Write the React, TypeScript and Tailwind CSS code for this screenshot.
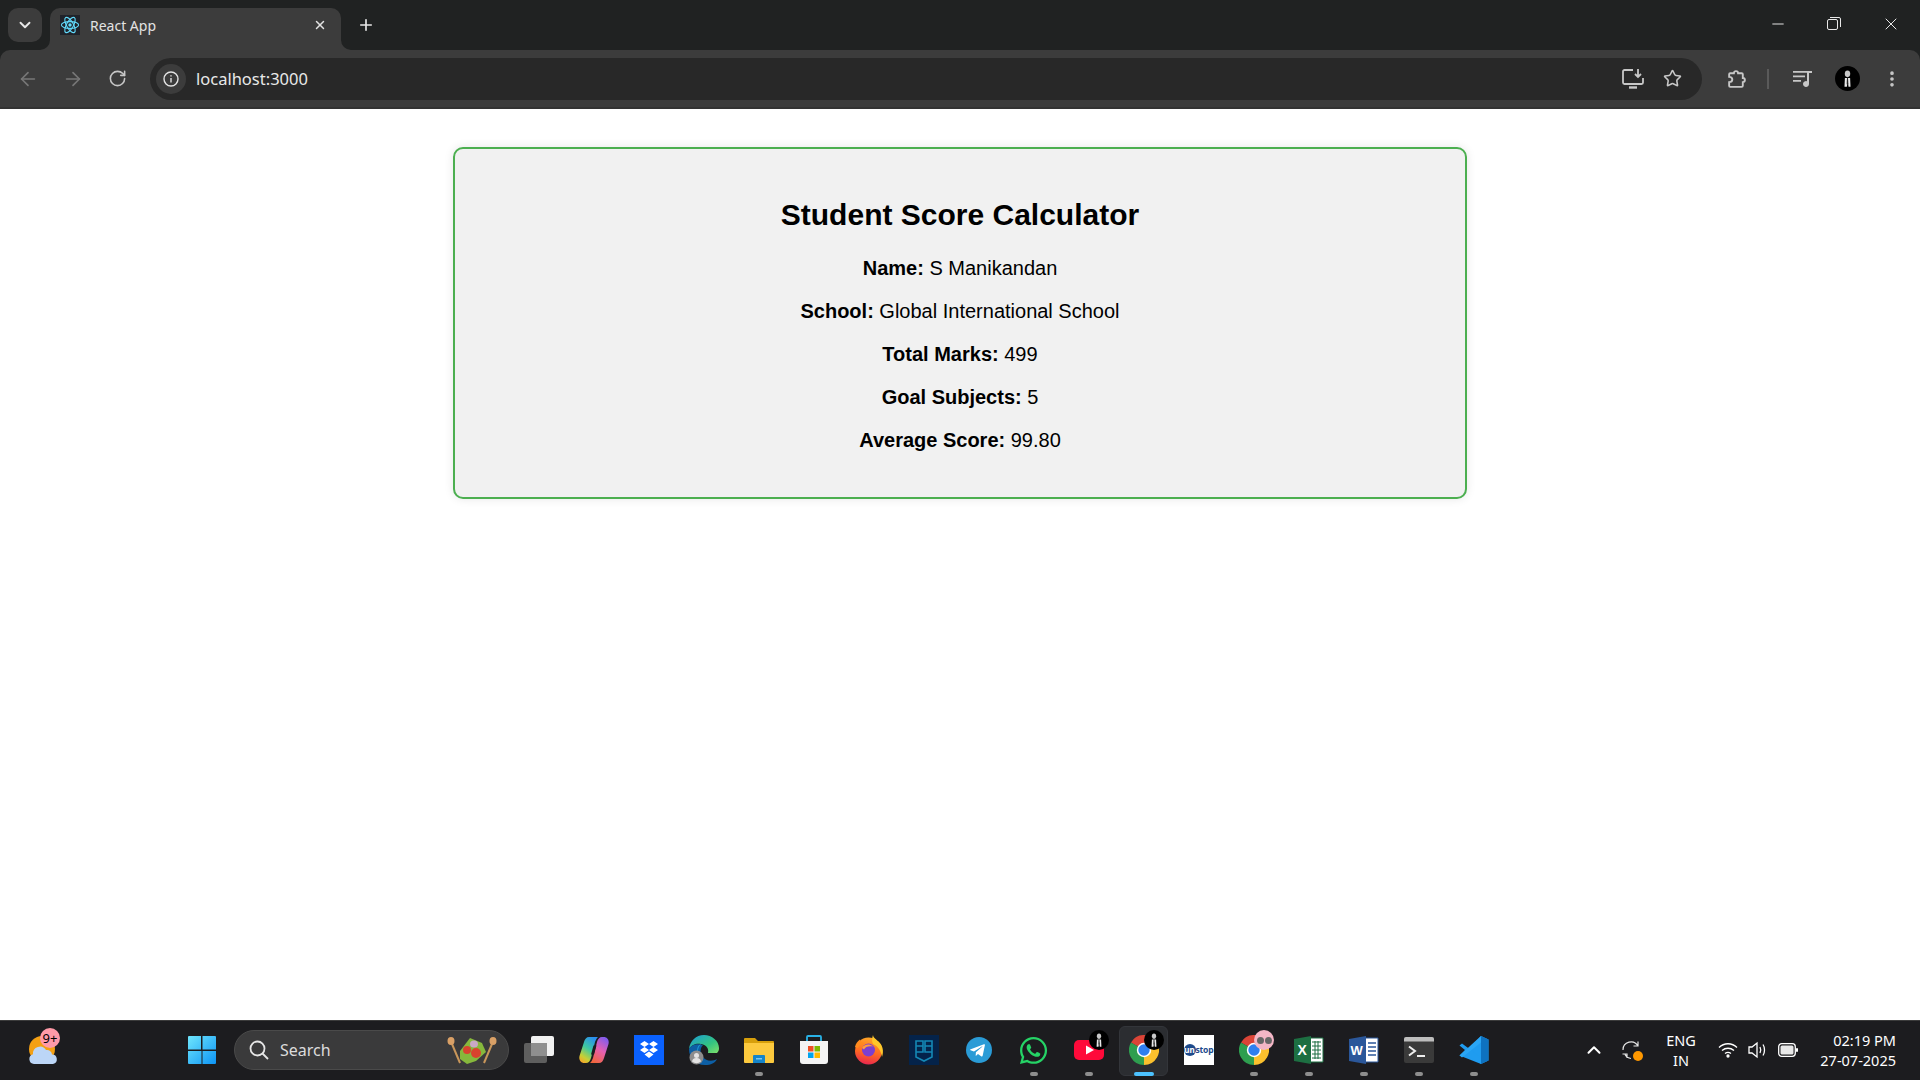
import React from 'react';
import { ArrowLeft, ArrowRight, RotateCw, Star, EllipsisVertical, Plus, X, ChevronDown, ChevronUp, Minus } from 'lucide-react';
import { FaWhatsapp, FaTelegramPlane } from 'react-icons/fa';

function ReactLogo() {
  return (
    <svg viewBox="0 0 20 20" className="w-5 h-5 bg-[#20232a]">
      <g fill="none" stroke="#61dafb" strokeWidth="1.1">
        <ellipse cx="10" cy="10" rx="8.6" ry="3.4" />
        <ellipse cx="10" cy="10" rx="8.6" ry="3.4" transform="rotate(60 10 10)" />
        <ellipse cx="10" cy="10" rx="8.6" ry="3.4" transform="rotate(120 10 10)" />
      </g>
      <circle cx="10" cy="10" r="1.7" fill="#61dafb" />
    </svg>
  );
}

function Figure({ id }: { id: string }) {
  return (
    <svg viewBox="0 0 24 24" className="w-full h-full" data-figure={id}>
      <circle cx="12" cy="12" r="12" fill="#000" />
      <ellipse cx="12" cy="7.5" rx="2.6" ry="3.2" fill="#c9c9c9" />
      <path d="M9.5 11.5h5l.4 8.5h-1.9l-.8-6-.8 6H9.1z" fill="#e8e8e8" />
      <path d="M11.5 11.5h1l.3 6h-1.6z" fill="#222" />
    </svg>
  );
}

function TabFlare({ flip }: { flip?: boolean }) {
  return (
    <svg viewBox="0 0 10 10" className={`w-2.5 h-2.5 self-end ${flip ? '-scale-x-100' : ''}`}>
      <path d="M10 0v10H0A10 10 0 0 0 10 0z" fill="#3c3c3c" />
    </svg>
  );
}

function Chrome({ size = 30 }: { size?: number }) {
  return (
    <svg viewBox="0 0 30 30" width={size} height={size}>
      <path d="M15 15 2 7.5A15 15 0 0 1 28 7.5z" fill="#db4437" />
      <path d="M15 15 28 7.5A15 15 0 0 1 15 30z" fill="#fbc02d" />
      <path d="M15 15 15 30A15 15 0 0 1 2 7.5z" fill="#2e9e4f" />
      <circle cx="15" cy="15" r="7.2" fill="#fff" />
      <circle cx="15" cy="15" r="5.7" fill="#2f7ff0" />
    </svg>
  );
}

function WindowsLogo() {
  return (
    <svg viewBox="0 0 30 30" className="w-[30px] h-[30px]">
      <defs>
        <linearGradient id="win" x1="0" y1="0" x2="1" y2="1">
          <stop offset="0" stopColor="#6fe6fc" />
          <stop offset="1" stopColor="#0d94f5" />
        </linearGradient>
      </defs>
      <path d="M1 2a1 1 0 0 1 1-1h12v13.500H1zM15.500 1H28a1 1 0 0 1 1 1v12.500H15.500zM1 16h13.500v13H2a1 1 0 0 1-1-1zM15.500 16H29v12a1 1 0 0 1-1 1H15.500z" fill="url(#win)" />
    </svg>
  );
}

function TaskView() {
  return (
    <svg viewBox="0 0 30 30" className="w-[30px] h-[30px]">
      <rect x="0" y="8" width="23" height="20" rx="2" fill="#5e5e5e" />
      <rect x="7" y="1" width="23" height="20" rx="2" fill="#f1f1f1" />
      <rect x="7" y="8" width="16" height="13" fill="#8f8f8f" />
    </svg>
  );
}

function Copilot() {
  return (
    <svg viewBox="0 0 30 30" className="w-[30px] h-[30px]">
      <defs>
        <linearGradient id="cpA" x1="0.7" y1="0" x2="0.2" y2="1">
          <stop offset="0" stopColor="#2a8ff0" />
          <stop offset="0.45" stopColor="#3fc9a0" />
          <stop offset="0.8" stopColor="#c7d034" />
          <stop offset="1" stopColor="#f6a52a" />
        </linearGradient>
        <linearGradient id="cpB" x1="0.3" y1="1" x2="0.8" y2="0">
          <stop offset="0" stopColor="#f0653f" />
          <stop offset="0.5" stopColor="#e55fb0" />
          <stop offset="1" stopColor="#7d5cf0" />
        </linearGradient>
      </defs>
      <path d="M10 2h9c-1.500 1-2 3-3 5l-4 16c-.8 3-2.500 5-5 5H5c-3 0-5.500-3-4.500-7L5 7c.8-3 2.500-5 5-5z" fill="url(#cpA)" />
      <path d="M20 28h-9c1.500-1 2-3 3-5l4-16c.8-3 2.500-5 5-5h2c3 0 5.500 3 4.500 7L25 23c-.8 3-2.500 5-5 5z" fill="url(#cpB)" />
      <path d="M14.500 10.500h3l-2.500 9h-3z" fill="#1c1c1f" />
    </svg>
  );
}

function Dropbox() {
  return (
    <svg viewBox="0 0 30 30" className="w-[30px] h-[30px]">
      <rect width="30" height="30" fill="#0a61fe" />
      <path d="M10.500 6 6 9l4.500 3L15 9zM19.500 6 15 9l4.500 3L24 9zM6 15l4.500 3L15 15l-4.500-3zM24 15l-4.500 3L15 15l4.500-3zM10.500 19.500 15 16.500l4.500 3L15 23z" fill="#fff" />
    </svg>
  );
}

function Edge() {
  return (
    <svg viewBox="0 0 30 30" className="w-[30px] h-[30px]">
      <defs>
        <linearGradient id="edA" x1="0" y1="0" x2="1" y2="1">
          <stop offset="0" stopColor="#1b9bd8" />
          <stop offset="0.6" stopColor="#33c481" />
          <stop offset="1" stopColor="#7fe06a" />
        </linearGradient>
      </defs>
      <path d="M15 0C7 0 1 6 0 14c3-5 8-6 12-5 6 1 8 5 7 9h9c2-2 2-4 2-5C30 6 23 0 15 0z" fill="url(#edA)" />
      <path d="M0 14c0 9 6 16 16 16 6 0 10-2 12-6-5 3-12 2-15-3-2-3-2-8 1-11-6-2-12 0-14 4z" fill="#0d5fa5" />
      <path d="M12 9c-3 1-5 5-3 10 2 5 6 8 11 8-6 0-10-4-11-9-.5-4 1-7 3-9z" fill="#1b9bd8" />
      <circle cx="7.500" cy="22.500" r="7" fill="#8d8d8d" />
      <circle cx="7.500" cy="20.500" r="2.500" fill="#e3e3e3" />
      <path d="M3 26.500c.6-3 2.500-3.500 4.500-3.500s3.900.5 4.500 3.500a7 7 0 0 1-9 0z" fill="#e3e3e3" />
    </svg>
  );
}

function Files() {
  return (
    <svg viewBox="0 0 30 30" className="w-[30px] h-[30px]">
      <path d="M0 4a1 1 0 0 1 1-1h10l3 3h15a1 1 0 0 1 1 1v6H0z" fill="#d79f0b" />
      <path d="M0 8h30v19a1 1 0 0 1-1 1H1a1 1 0 0 1-1-1z" fill="#fcc93e" />
      <path d="M9 21a1 1 0 0 1 1-1h10a1 1 0 0 1 1 1v7H9z" fill="#1584c9" />
      <rect x="12" y="23" width="6" height="1.500" fill="#7cc6ef" />
    </svg>
  );
}

function Store() {
  return (
    <svg viewBox="0 0 30 30" className="w-[30px] h-[30px]">
      <path d="M8 6V2a1 1 0 0 1 1-1h12a1 1 0 0 1 1 1v4" fill="none" stroke="#29b2e6" strokeWidth="1.800" />
      <path d="M1 6h28v20a3 3 0 0 1-3 3H4a3 3 0 0 1-3-3z" fill="#f4f4f4" />
      <rect x="9" y="11" width="5.500" height="5.500" fill="#ef4f25" />
      <rect x="15.500" y="11" width="5.500" height="5.500" fill="#7fb900" />
      <rect x="9" y="17.500" width="5.500" height="5.500" fill="#00a4ef" />
      <rect x="15.500" y="17.500" width="5.500" height="5.500" fill="#ffb900" />
    </svg>
  );
}

function Firefox() {
  return (
    <svg viewBox="0 0 30 30" className="w-[30px] h-[30px]">
      <defs>
        <linearGradient id="ffA" x1="0.6" y1="0" x2="0.4" y2="1">
          <stop offset="0" stopColor="#ffa726" />
          <stop offset="0.55" stopColor="#ff6a21" />
          <stop offset="1" stopColor="#e8264f" />
        </linearGradient>
      </defs>
      <circle cx="14.500" cy="16" r="13.500" fill="url(#ffA)" />
      <path d="M19 0c0 4 8 6 9.500 13 .8 3 .5 6-.5 9-1-6-4-11-9-13-1.500-3-1-6 0-9z" fill="#ffc72b" />
      <path d="M1 12c.5-3 2.500-6 5-7.500 0 2 2 3.500 5 3.500-3 1-6 2-7 5z" fill="#ff8a1e" />
      <circle cx="14.500" cy="15" r="6.500" fill="#7b3fd0" />
      <path d="M8 13c2-3.500 7-5 11-1.500-3.500-1-8 0-9 3z" fill="#ff9d3b" />
    </svg>
  );
}

function Shield() {
  return (
    <svg viewBox="0 0 30 30" className="w-[30px] h-[30px]">
      <rect width="30" height="30" fill="#04234a" />
      <path d="M7 6h7v11h-7zM16 6h7v11h-7zM7 17v5l8 4 8-4v-5M14 11H7M23 11h-7" fill="none" stroke="#1488b5" strokeWidth="1.600" />
    </svg>
  );
}

function Telegram() {
  return (
    <div className="w-[26px] h-[26px] rounded-full bg-[#2a9bd6] flex items-center justify-center">
      <FaTelegramPlane className="w-[17px] h-[17px] text-white -ml-0.5" />
    </div>
  );
}

function YouTube() {
  return (
    <svg viewBox="0 0 30 30" className="w-[30px] h-[30px]">
      <rect y="5" width="30" height="20" rx="5" fill="#ff0a3a" />
      <path d="M12 10.500 20 15l-8 4.500z" fill="#fff" />
    </svg>
  );
}

function Unstop() {
  return (
    <div className="w-[30px] h-[30px] bg-white flex items-center overflow-hidden">
      <span className="w-3 h-3 rounded-full bg-[#1d4a8c] text-white text-[8px] leading-3 font-bold text-center shrink-0">un</span>
      <span className="text-[#1d4a8c] text-[8.5px] font-bold tracking-tight leading-3">stop</span>
    </div>
  );
}

function Excel() {
  return (
    <svg viewBox="0 0 30 30" className="w-[30px] h-[30px]">
      <path d="M14 3h15v24H14z" fill="#fff" stroke="#1d6f42" strokeWidth="1" />
      <path d="M18 7h9M18 11h9M18 15h9M18 19h9M18 23h9M21 6v18M24 6v18" stroke="#1d6f42" strokeWidth="1" />
      <path d="M0 4l17-3v28L0 26z" fill="#1d6f42" />
      <text x="3.500" y="20" fill="#fff" fontSize="14" fontWeight="700" fontFamily="Liberation Sans, sans-serif">X</text>
    </svg>
  );
}

function Word() {
  return (
    <svg viewBox="0 0 30 30" className="w-[30px] h-[30px]">
      <path d="M14 3h15v24H14z" fill="#fff" stroke="#2b579a" strokeWidth="1" />
      <path d="M19 8h8M19 12h8M19 16h8M19 20h8" stroke="#2b579a" strokeWidth="1.600" />
      <path d="M0 4l17-3v28L0 26z" fill="#2b579a" />
      <text x="1.500" y="20" fill="#fff" fontSize="13" fontWeight="700" fontFamily="Liberation Sans, sans-serif">W</text>
    </svg>
  );
}

function Terminal() {
  return (
    <svg viewBox="0 0 30 30" className="w-[30px] h-[30px]">
      <rect y="2" width="30" height="26" rx="2" fill="#3a3a3a" />
      <path d="M0 4a2 2 0 0 1 2-2h26a2 2 0 0 1 2 2v2.500H0z" fill="#bdbdbd" />
      <path d="M5 11.500 11 16l-6 4.500" fill="none" stroke="#eee" strokeWidth="2" />
      <path d="M13 21h8" stroke="#eee" strokeWidth="2" />
    </svg>
  );
}

function VsCode() {
  return (
    <svg viewBox="0 0 30 30" className="w-[30px] h-[30px]">
      <path d="M22 1 29.500 4.500v21L22 29 8 16z" fill="#1f9cf0" />
      <path d="M22 1 29.500 4.500v21L22 29z" fill="#0e72c0" />
      <path d="M.5 10.500 3 8.500l19 14v6.500L.5 20.500l5.500-5.500z" fill="#1f9cf0" />
      <path d="M.5 20.500 3 22.500 22 7.500V1z" fill="#2aa6f5" />
    </svg>
  );
}

function Weather() {
  return (
    <svg viewBox="0 0 30 30" className="w-[30px] h-[34px]">
      <circle cx="14" cy="14" r="13" fill="#f3a014" />
      <path d="M6 29a5 5 0 0 1-1-9.800A7 7 0 0 1 18 15a5 5 0 0 1 6 4.500A4.800 4.800 0 0 1 25 29z" fill="#bcd6f7" />
    </svg>
  );
}

function Salad() {
  return (
    <svg viewBox="0 0 52 28" className="w-[52px] h-7">
      <path d="M6 8 14 27" stroke="#c8965a" strokeWidth="2" />
      <path d="M46 8 38 27" stroke="#c8965a" strokeWidth="2" />
      <ellipse cx="5" cy="5" rx="3.500" ry="4" fill="#d9a066" />
      <ellipse cx="47" cy="5" rx="3.500" ry="4" fill="#d9a066" />
      <path d="M14 15 24 2l12 5 4 9-10 9-9 3-7-5z" fill="#86b83c" />
      <circle cx="30" cy="17" r="5" fill="#d8432e" />
      <circle cx="21" cy="14" r="4" fill="#d8432e" />
      <ellipse cx="28" cy="8" rx="4" ry="3.500" fill="#c9a8c6" />
    </svg>
  );
}

const apps = [
  { key: 'taskview', icon: <TaskView /> },
  { key: 'copilot', icon: <Copilot /> },
  { key: 'dropbox', icon: <Dropbox /> },
  { key: 'edge', icon: <Edge /> },
  { key: 'files', icon: <Files />, running: true },
  { key: 'store', icon: <Store /> },
  { key: 'firefox', icon: <Firefox /> },
  { key: 'shield', icon: <Shield /> },
  { key: 'telegram', icon: <Telegram /> },
  { key: 'whatsapp', icon: <FaWhatsapp className="w-[31px] h-[31px] text-[#25d366]" />, running: true },
  { key: 'youtube', icon: <YouTube />, running: true, figure: true },
  { key: 'chrome', icon: <Chrome />, active: true, figure: true },
  { key: 'unstop', icon: <Unstop /> },
  { key: 'chrome2', icon: <Chrome />, running: true, glasses: true },
  { key: 'excel', icon: <Excel />, running: true },
  { key: 'word', icon: <Word />, running: true },
  { key: 'terminal', icon: <Terminal />, running: true },
  { key: 'vscode', icon: <VsCode />, running: true },
];

function BrowserChrome() {
  return (
    <div className="shrink-0 font-['Noto_Sans',sans-serif]">
      <div className="h-[50px] bg-[#202222] flex items-start pl-2">
        <button className="mt-2 w-[34px] h-[34px] rounded-[10px] bg-[#3c3c3c] flex items-center justify-center text-[#e8e8e8]">
          <ChevronDown className="w-[18px] h-[18px]" strokeWidth={2.5} />
        </button>
        <div className="ml-[-2px] h-full flex">
          <TabFlare />
          <div className="mt-2 w-[291px] h-[42px] bg-[#3c3c3c] rounded-t-[10px] flex items-center pl-[10px] pr-[14px] pb-2 text-[#e3e3e3]">
            <ReactLogo />
            <span className="ml-[10px] text-[14px] flex-1">React App</span>
            <X className="w-[14px] h-[14px]" strokeWidth={2.5} />
          </div>
          <TabFlare flip />
        </div>
        <Plus className="ml-[6px] mt-[16px] w-[18px] h-[18px] text-[#e8e8e8]" strokeWidth={2.2} />
        <div className="ml-auto h-[50px] flex items-start text-[#e8e8e8]">
          <div className="w-[56px] flex justify-center pt-[15px]"><Minus className="w-[18px] h-[18px]" strokeWidth={1.3} /></div>
          <div className="w-[56px] flex justify-center pt-[17px]">
            <svg viewBox="0 0 14 14" className="w-[14px] h-[14px]" fill="none" stroke="currentColor">
              <rect x="0.500" y="2.500" width="10" height="10" rx="1.500" />
              <path d="M3 .5h9a1.500 1.500 0 0 1 1.500 1.500v8" />
            </svg>
          </div>
          <div className="w-[58px] flex justify-center pt-[14px]"><X className="w-[20px] h-[20px]" strokeWidth={1.2} /></div>
        </div>
      </div>
      <div className="h-[59px] bg-[#202222]">
        <div className="h-full bg-[#3c3c3c] rounded-t-[10px] border-b-2 border-[#333333] flex items-center pl-[17px]">
          <ArrowLeft className="w-[22px] h-[22px] text-[#777777]" strokeWidth={1.8} />
          <ArrowRight className="ml-[23px] w-[22px] h-[22px] text-[#777777]" strokeWidth={1.8} />
          <RotateCw className="ml-[24px] w-[19px] h-[19px] text-[#c7c7c7]" strokeWidth={2} />
          <div className="ml-[23px] w-[1552px] h-[42px] rounded-full bg-[#282828] flex items-center pl-[6px] pr-[20px]">
            <span className="w-[30px] h-[30px] rounded-full bg-[#3c3c3c] flex items-center justify-center">
              <svg viewBox="0 0 16 16" className="w-4 h-4" fill="none" stroke="#e3e3e3" strokeWidth="1.400">
                <circle cx="8" cy="8" r="7" />
                <path d="M8 7v4.500M8 4.200v1.300" />
              </svg>
            </span>
            <span className="ml-[10px] mt-[2px] text-[16.5px] text-[#e8e8e8] flex-1">localhost:3000</span>
            <svg viewBox="0 0 22 20" className="w-[22px] h-5" fill="none" stroke="#c7c7c7" strokeWidth="1.800">
              <path d="M11 1H2.500A1.500 1.500 0 0 0 1 2.500v11A1.500 1.500 0 0 0 2.500 15h17a1.500 1.500 0 0 0 1.500-1.500V9" />
              <path d="M7 18.500h8" strokeWidth="2.400" />
              <path d="M16 0v7M13 5l3 3 3-3" />
            </svg>
            <Star className="ml-[19px] w-[19px] h-[19px] text-[#c7c7c7]" strokeWidth={2} />
          </div>
          <svg viewBox="0 0 20 20" className="ml-[24px] w-[21px] h-[21px]" fill="none" stroke="#c7c7c7" strokeWidth="1.800">
            <path d="M4 5h3.500a2 2 0 0 1 4 0H15a1 1 0 0 1 1 1v3.500a2 2 0 0 1 0 4V17a1 1 0 0 1-1 1H4a1 1 0 0 1-1-1v-3.500c2 0 3-1 3-2.500s-1-2.500-3-2.500V6a1 1 0 0 1 1-1z" />
          </svg>
          <span className="ml-[20px] w-[2px] h-[20px] bg-[#5a5a5a]" />
          <svg viewBox="0 0 20 20" className="ml-[24px] w-5 h-5" fill="#c7c7c7">
            <path d="M0 2h14v1.800H0zM0 6.500h12v1.800H0zM0 11h8v1.800H0z" />
            <path d="M14 2h5v2h-3v11a3 3 0 1 1-2-2.800z" />
          </svg>
          <span className="ml-[22px] w-[25px] h-[25px]"><Figure id="avatar" /></span>
          <EllipsisVertical className="ml-[22px] w-[20px] h-[20px] text-[#c7c7c7]" strokeWidth={2.4} />
        </div>
      </div>
    </div>
  );
}

function Taskbar() {
  return (
    <div className="h-[60px] shrink-0 bg-[#1c1c1f] border-t border-[#3b3b3b] flex items-center pb-px font-['Noto_Sans',sans-serif]">
      <div className="ml-[28px] w-[30px] relative flex items-center">
        <Weather />
        <span className="absolute -top-[5px] left-[12px] w-5 h-5 rounded-full bg-[#ff9aa8] text-black text-[13px] leading-5 text-center">9+</span>
      </div>
      <div className="ml-[129px]"><WindowsLogo /></div>
      <div className="ml-[17px] w-[275px] h-[40px] rounded-full bg-[#3a3a3b] border border-[#4a4a4a] flex items-center pl-[14px] pr-[10px] text-[#dcdcdc]">
        <svg viewBox="0 0 20 20" className="w-5 h-5" fill="none" stroke="#e6e6e6" strokeWidth="1.800">
          <circle cx="8.500" cy="8.500" r="7" />
          <path d="M13.500 13.500 19 19" />
        </svg>
        <span className="ml-[11px] text-[16px] flex-1">Search</span>
        <Salad />
      </div>
      <div className="ml-[2px] flex h-full">
        {apps.map((app) => (
          <div key={app.key} className="relative w-[55px] h-full flex items-center justify-center">
            {app.active && (
              <span className="absolute left-[3px] top-[5px] w-[49px] h-[50px] rounded-md bg-[#2b2d31] border border-[#33353a]" />
            )}
            <span className="relative flex items-center justify-center">{app.icon}</span>
            {app.figure && (
              <span className="absolute left-[28px] top-[9px] w-5 h-5"><Figure id={app.key} /></span>
            )}
            {app.glasses && (
              <span className="absolute left-[28px] top-[9px] w-5 h-5 rounded-full bg-[#f3b6c6] flex items-center justify-center gap-px">
                <span className="w-[7px] h-[7px] rounded-full bg-[#666666]" />
                <span className="w-[7px] h-[7px] rounded-full bg-[#666666]" />
              </span>
            )}
            {app.running && (
              <span className="absolute left-[24px] bottom-[3px] w-2 h-1 rounded-full bg-[#8e8e8e]" />
            )}
            {app.active && (
              <span className="absolute left-[18px] bottom-[3px] w-5 h-1 rounded-full bg-[#4cc2ff]" />
            )}
          </div>
        ))}
      </div>
      <div className="ml-auto flex items-center text-white text-[14.5px] leading-5">
        <ChevronUp className="w-[22px] h-[22px]" strokeWidth={2.2} />
        <span className="ml-[17px] relative w-5 h-5">
          <svg viewBox="0 0 20 20" className="w-5 h-5" fill="none" stroke="#e6e6e6" strokeWidth="1.200">
            <path d="M1 10a8 8 0 0 1 15-4M16 1.500V6h-4.500" />
            <path d="M3 14.500a8 8 0 0 0 6 4M.5 14H5v4" />
          </svg>
          <span className="absolute right-[-1px] bottom-[-1px] w-[10px] h-[10px] rounded-full bg-[#ff9800]" />
        </span>
        <div className="ml-[11px] w-[56px] text-center">
          <div>ENG</div>
          <div>IN</div>
        </div>
        <svg viewBox="0 0 20 16" className="ml-[9px] w-5 h-4" fill="none" stroke="#fff" strokeWidth="1.300">
          <path d="M1 5.500c5-5 13-5 18 0M4 8.500c3.500-3 8.500-3 12 0M7 11.500c1.800-1.400 4.200-1.400 6 0" />
          <circle cx="10" cy="14" r="1" fill="#fff" />
        </svg>
        <svg viewBox="0 0 20 18" className="ml-[10px] w-5 h-[18px]" fill="none" stroke="#fff" strokeWidth="1.300">
          <path d="M1 6h3l5-4v14l-5-4H1z" />
          <path d="M12 6c1 2 1 4 0 6M15 3.500c2 3 2 8 0 11" />
        </svg>
        <svg viewBox="0 0 20 14" className="ml-[10px] w-5 h-[14px]">
          <rect x="0.700" y="0.700" width="16.600" height="12.600" rx="3" fill="none" stroke="#fff" strokeWidth="1.300" />
          <rect x="2.500" y="2.500" width="13" height="9" rx="1.500" fill="#e8e8e8" />
          <rect x="18" y="5" width="2" height="4" rx="1" fill="#fff" />
        </svg>
        <div className="ml-[20px] mr-[24px] w-[78px] text-right whitespace-nowrap">
          <div>02:19 PM</div>
          <div>27-07-2025</div>
        </div>
      </div>
    </div>
  );
}

export default function App() {
  return (
    <div className="h-screen flex flex-col overflow-hidden bg-white">
      <BrowserChrome />
      <main className="flex-1 pt-[38px] font-['Liberation_Sans',Arial,sans-serif] text-black">
        <div className="mx-auto w-[1014px] h-[352px] bg-[#f1f1f1] border-2 border-[#4caf50] rounded-[10px] shadow-[0_0_10px_rgba(0,0,0,0.1)] p-[24px] text-center">
          <h1 className="text-[30px] leading-[35px] font-bold mt-[24px] mb-[25px]">Student Score Calculator</h1>
          <div className="flex flex-col gap-[20px] text-[20px] leading-[23px]">
            <p><strong>Name:</strong> S Manikandan</p>
            <p><strong>School:</strong> Global International School</p>
            <p><strong>Total Marks:</strong> 499</p>
            <p><strong>Goal Subjects:</strong> 5</p>
            <p><strong>Average Score:</strong> 99.80</p>
          </div>
        </div>
      </main>
      <Taskbar />
    </div>
  );
}
